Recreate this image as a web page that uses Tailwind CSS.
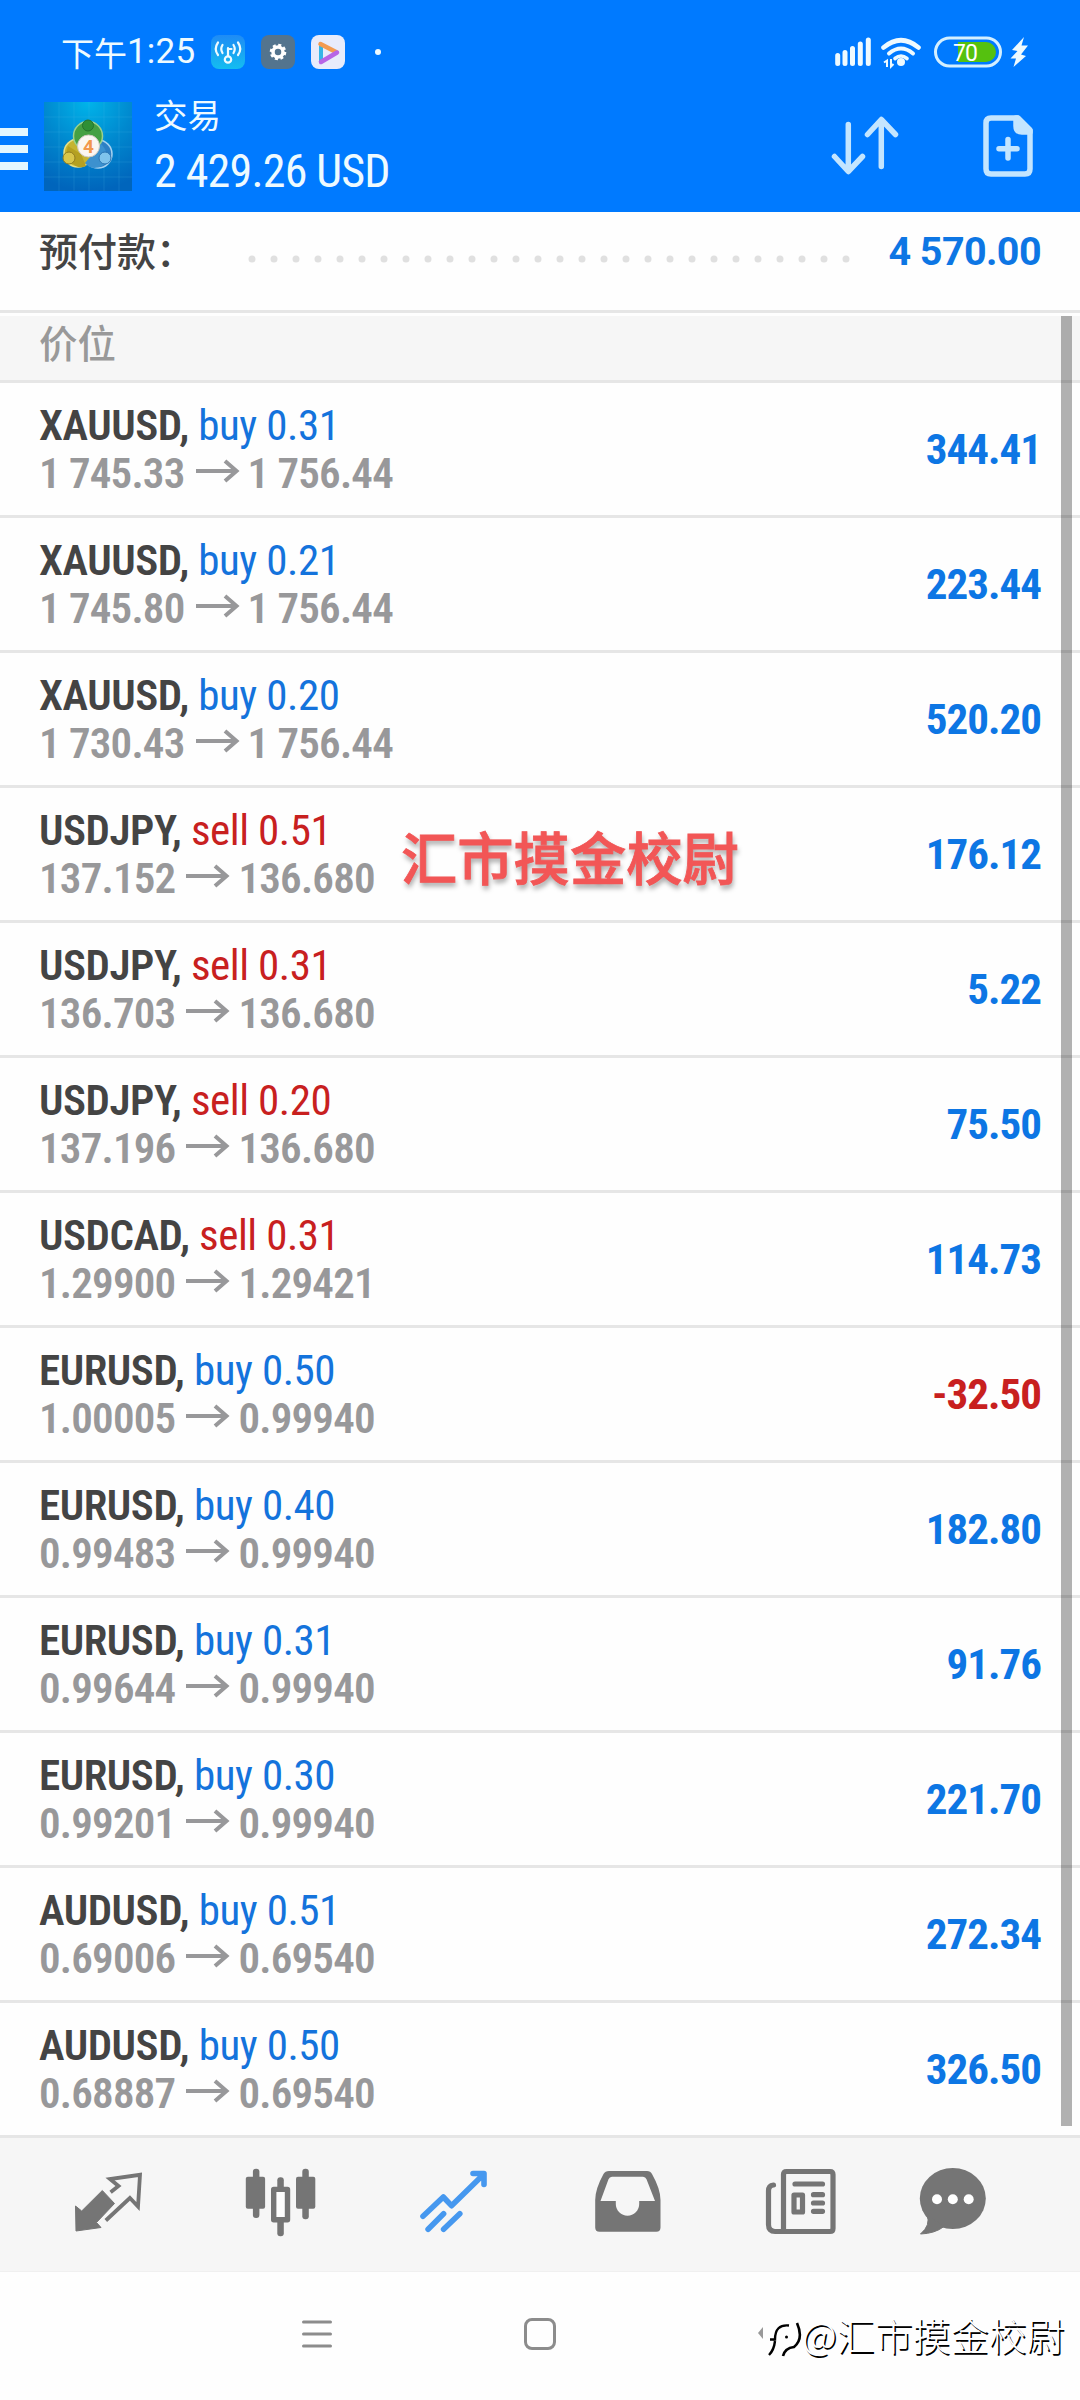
<!DOCTYPE html>
<html lang="zh-Hans">
  <head>
    <meta charset="UTF-8">
    <title>交易</title>
    <script src="https://cdn.jsdelivr.net/npm/@tailwindcss/browser@4"></script>
    <meta name="viewport" content="width=device-width, initial-scale=1.0" />
  </head>
  <body class="bg-white">
    <div class="relative w-[1080px] h-[2400px] overflow-hidden flex flex-col bg-[#fefefe] font-['Roboto_Condensed','Noto_Sans_CJK_SC',sans-serif]">

      <header class="h-[212px] bg-[#007aff] text-[#eefaff] shrink-0">
        <!-- status bar -->
        <div class="h-[86px] pt-[18px] pl-[61px] pr-[50px] flex items-center">
          <div class="w-[150px] h-[34px] flex items-center text-[33px] leading-[34px] font-['Noto_Sans_CJK_SC',sans-serif] whitespace-nowrap">下午<span class="font-['Roboto','Noto_Sans_CJK_SC',sans-serif] text-[35px] tracking-[0.2px]">1:25</span></div>
          <div class="flex gap-4 items-center">
            <svg width="34" height="34" viewBox="0 0 34 34">
              <defs><linearGradient id="hot" x1="0" y1="0" x2="0" y2="1"><stop offset="0" stop-color="#1f8bf5" /><stop offset="1" stop-color="#14bdf0" /></linearGradient></defs>
              <rect width="34" height="34" rx="8" fill="url(#hot)" />
              <g fill="none" stroke="#eefaff" stroke-width="2.2" stroke-linecap="round">
                <circle cx="17" cy="24.500" r="3.200" /><path d="M17 21V13M17 14h3.500" />
                <path d="M11.500 10q-2.500 4 0 8M22.500 10q2.500 4 0 8M7 7.500q-4.500 6.500 0 12.500M27 7.500q4.500 6.500 0 12.500" />
              </g>
            </svg>
            <svg width="34" height="34" viewBox="0 0 34 34">
              <rect width="34" height="34" rx="8" fill="#53748e" />
              <circle cx="17" cy="17" r="5" fill="none" stroke="#fff" stroke-width="3.500" />
              <circle cx="17" cy="17" r="7" fill="none" stroke="#fff" stroke-width="2.600" stroke-dasharray="3 2.500" />
            </svg>
            <svg width="34" height="34" viewBox="0 0 34 34">
              <rect width="34" height="34" rx="8" fill="#e8ecfb" />
              <path d="M10 10V26" stroke="#35b5e6" stroke-width="4" />
              <path d="M9.500 9L25 17" stroke="#f49b50" stroke-width="4.500" stroke-linecap="round" />
              <path d="M26 17.500L10 27" stroke="#b765e6" stroke-width="4.500" stroke-linecap="round" />
            </svg>
          </div>
          <div class="w-1.5 h-1.5 rounded-full bg-[#eefaff] ml-[30px]"></div>
          <svg class="ml-auto" width="200" height="34" viewBox="830 35 200 34">
            <path d="M837.700 55.500V63.500M845 52.500V63.500M852.500 48.500V63.500M860.300 44V63.500M868.300 40V63.500" stroke="#eefaff" stroke-width="5" stroke-linecap="round" />
            <g fill="none" stroke="#eefaff" stroke-width="4.600" stroke-linecap="round">
              <path d="M883.500 47.500Q901 33 918.500 47.500" /><path d="M889 53.500Q901 43.500 913 53.500" stroke-width="4" /><path d="M895 58.500Q901 53.500 907 58.500" stroke-width="3.600" />
            </g>
            <circle cx="901" cy="62" r="4" fill="#eefaff" />
            <path d="M884 62.500L887 60.500V67M891 59V66.500L893.500 64" fill="none" stroke="#eefaff" stroke-width="2" />
            <rect x="935.500" y="38" width="65" height="28" rx="14" fill="none" stroke="#d3efff" stroke-width="3" />
            <path d="M958 42H986a10 10 0 0 1 0 20H958z" fill="#55c10f" />
            <text x="953" y="60.500" font-size="23" class="font-['Roboto',sans-serif]" textLength="25" fill="#fff">70</text>
            <path d="M1024 37L1012 50L1017.500 51L1010.500 58.500L1016 58.500L1013.500 67L1026 56L1021 54.500L1028 45.500L1021.500 45.500Z" fill="#eefaff" />
          </svg>
        </div>
        <!-- account -->
        <div class="flex items-start">
          <div class="mt-[42px] w-[28px] flex flex-col gap-[9px]">
            <div class="h-2 bg-[#e4f7ff]"></div>
            <div class="h-2 bg-[#e4f7ff]"></div>
            <div class="h-2 bg-[#e4f7ff]"></div>
          </div>
          <svg class="mt-4 ml-4" width="88" height="89" viewBox="0 0 88 89">
            <defs>
              <radialGradient id="bg" cx=".5" cy="0" r="1"><stop offset="0" stop-color="#00b4ea" /><stop offset=".5" stop-color="#0089cf" /><stop offset="1" stop-color="#0065bc" /></radialGradient>
            </defs>
            <rect width="88" height="89" fill="url(#bg)" />
            <path d="M15 0V89M30 0V89M45 0V89M60 0V89M75 0V89M0 15H88M0 30H88M0 45H88M0 60H88M0 75H88" stroke="#4bc4ef" stroke-opacity=".18" />
            <circle cx="54" cy="52" r="14" fill="#2d7fc4" stroke="#a6d2f0" stroke-width="1.500" />
            <circle cx="34" cy="51" r="14" fill="#c5b431" stroke="#e7df86" stroke-width="1.500" />
            <circle cx="44" cy="34" r="14.500" fill="#45a043" stroke="#9bd18e" stroke-width="1.500" />
            <path d="M57 42Q66 50 60 63Q48 70 41 61Z" fill="#3c91cf" />
            <path d="M24 44Q20 54 27 60Q34 68 42 64L37 52Z" fill="#b5a021" />
            <circle cx="44" cy="23.500" r="5.500" fill="#2f8f35" stroke="#25722d" />
            <circle cx="25" cy="56" r="6" fill="#d9c64a" stroke="#917c1f" />
            <circle cx="61" cy="56" r="6" fill="#7fc3ec" stroke="#2a74b3" />
            <circle cx="44.500" cy="44" r="11" fill="#fbf6f1" stroke="#cfc9bf" />
            <text x="44.500" y="50.500" text-anchor="middle" font-size="19" class="font-['Roboto',sans-serif] font-bold" fill="#f2974d">4</text>
          </svg>
          <div class="ml-[22px] leading-[57px]">
            <div class="text-[33.500px] h-[57px] font-['Noto_Sans_CJK_SC',sans-serif]"><span class="relative -top-px">交易</span></div>
            <div class="text-[46px] tracking-[-0.800px]">2 429.26 USD</div>
          </div>
          <svg class="mt-[26px] ml-auto mr-[42px]" width="212" height="68" viewBox="826 112 212 68" fill="none" stroke="#c3e5ff" stroke-width="5.500" stroke-linecap="round" stroke-linejoin="round">
            <path d="M848.300 124.500V171M834.500 156.500L848.300 171.500L862.500 156.500" />
            <path d="M881.300 166.500V120M867.500 134.500L881.300 119.500L895.500 134.500" />
            <path d="M991 118H1017.500L1030 130.500V169q0 5-5 5H991q-5 0-5-5V123q0-5 5-5z" />
            <path d="M1016 118V126q0 6 6 6H1030V130L1018 118z" fill="#c3e5ff" />
            <path d="M999 148.800H1017M1008 139.500V158" />
          </svg>
        </div>
      </header>

      <!-- margin summary -->
      <div class="h-[101px] shrink-0 border-b-3 border-[#e6e6e6] px-[39px] pt-[15px] flex items-start leading-[50px]">
        <div class="w-[209px] text-[39px] font-medium text-[#444] font-['Noto_Sans_CJK_SC',sans-serif] whitespace-nowrap"><span class="relative -top-[3px]">预付款：</span></div>
        <svg class="mt-[28px]" width="602" height="8" viewBox="0 0 602 8">
          <path d="M4 4H600" stroke="#e0e0e0" stroke-width="7" stroke-linecap="round" stroke-dasharray="0 22" />
        </svg>
        <div class="ml-auto text-[39.500px] font-bold text-[#0d76e4] font-['Roboto',sans-serif] tracking-[-0.600px]">4 570.00</div>
      </div>

      <div class="mt-[3px] h-[67px] shrink-0 bg-[#f6f6f6] border-b-3 border-[#e6e6e6] px-[39px] text-[38.500px] leading-[50px] font-medium text-[#999] font-['Noto_Sans_CJK_SC',sans-serif]">价位</div>

      <div id="positions"></div>

      <!-- bottom tabs -->
      <nav class="h-[133px] shrink-0 bg-[#f6f6f6] pl-[21px] grid grid-cols-[repeat(5,173.300px)_131px] items-center justify-items-center">
        <svg width="80" height="80" viewBox="0 0 80 80">
          <path d="M7.500 41L13.700 46L34.300 25.500L46.500 38.500L28.500 57.500L33 62.500L8 66z" fill="#757575" stroke="#757575" stroke-linejoin="round" />
          <path d="M42.600 27.300L50.500 21L42 14L72 9.800L70 41.500L61.900 33L37.800 55.500" fill="none" stroke="#757575" stroke-width="3.800" />
        </svg>
        <svg width="80" height="80" viewBox="0 0 80 80" fill="#757575">
          <rect x="4.800" y="11.700" width="19.300" height="32" rx="2" /><rect x="11.900" y="3.700" width="6.500" height="49.300" rx="3" />
          <rect x="55" y="11.700" width="19.300" height="32" rx="2" /><rect x="61.300" y="3.700" width="6.500" height="50.500" rx="3" />
          <rect x="36.300" y="12.300" width="6.500" height="12" rx="3" /><rect x="36.300" y="54" width="6.500" height="17.300" rx="3" />
          <rect x="32.700" y="24.400" width="13.800" height="30.300" fill="#fdfdfd" stroke="#757575" stroke-width="5.400" stroke-linejoin="round" />
        </svg>
        <svg width="80" height="80" viewBox="0 0 80 80" fill="none" stroke="#4698ef" stroke-width="5.600" stroke-linecap="round" stroke-linejoin="round">
          <path d="M9 51.300L29.300 32L37.500 40.700L69.200 9.800M59 8.500H70V19.500M14.100 64.300L29.600 48.700M29.600 64.300L45.800 48.700" />
        </svg>
        <svg width="80" height="80" viewBox="0 0 80 80">
          <path fill="#757575" fill-rule="evenodd" d="M21 6H59q3.500 0 5 3Q72.500 24 72.500 35V62.500q0 4.200-4.200 4.200H11.500q-4.300 0-4.300-4.200V35Q7.200 24 15.500 9q1.700-3 5.500-3zM24 11.700q-2.500 0-3.500 2.500L12.500 36H27.800V39a11.700 11.700 0 0 0 23.400 0V36H67L58.500 14.200q-1-2.500-3.500-2.500z" />
        </svg>
        <svg width="80" height="80" viewBox="0 0 80 80" fill="none" stroke="#757575" stroke-width="5.200" stroke-linecap="round" stroke-linejoin="round">
          <path d="M22.500 66.500V9.500q0-3 3-3H69q3 0 3 3V63.500q0 3-3 3H14q-6.500 0-6.500-7V26q0-5.500 5-6" />
          <path d="M34 19H61.500M52.500 29.700H61.500M52.500 38H61.500M52.500 46.300H61.500" />
          <rect x="33" y="30" width="8.500" height="17" />
        </svg>
        <svg width="80" height="80" viewBox="0 0 80 80">
          <ellipse cx="39.800" cy="33.500" rx="33" ry="30.500" fill="#757575" />
          <path d="M14 50Q18 60 7.500 69Q22 68.500 31 61.500z" fill="#757575" stroke="#757575" />
          <circle cx="24" cy="34.300" r="5" fill="#fff" /><circle cx="39.800" cy="34.300" r="5" fill="#fff" /><circle cx="55.700" cy="34.300" r="5" fill="#fff" />
        </svg>
      </nav>

      <!-- system navigation -->
      <div class="h-[129px] shrink-0 border-t border-[#f0f0f0] pl-[302px] pb-1 flex items-center">
        <svg width="30" height="28" viewBox="0 0 30 28" stroke="#8c8c8c" stroke-width="3" stroke-linecap="round"><path d="M1.500 2H28.500M1.500 14H28.500M1.500 26H28.500" /></svg>
        <div class="ml-[192px] w-8 h-8 rounded-[8px] border-3 border-[#8c8c8c]"></div>
        <svg class="ml-[202px]" width="46" height="48" viewBox="0 0 46 48">
          <path d="M0 23L5 17V29z" fill="#999" />
          <path d="M12 29.500H17Q17 14 31 15.500M17 31Q16 40 11 45" fill="none" stroke="#000" stroke-width="2.400" />
          <path d="M39 13Q46 29 36 37Q27 38 25 46" fill="none" stroke="#000" stroke-width="2.600" />
          <circle cx="28.500" cy="27" r="1.500" />
        </svg>
        <div class="-ml-0.5 flex items-center text-[38px] text-white whitespace-nowrap font-light font-['Noto_Sans_CJK_SC',sans-serif] [text-shadow:1.500px_1.500px_0.500px_#000] leading-[56px]">@汇市摸金校尉</div>
      </div>

      <!-- scrollbar and overlay mark -->
      <div class="absolute left-[1061px] top-[316px] w-[11px] h-[1810px] bg-black/30"></div>
      <div class="absolute left-[401px] top-[818px] text-[56.300px] leading-[76px] font-medium text-[#f25656] font-['Noto_Sans_CJK_SC',sans-serif] whitespace-nowrap [-webkit-text-stroke:0.800px_#f25656] [text-shadow:1px_4px_5px_rgba(0,0,0,0.35)]">汇市摸金校尉</div>
    </div>

    <script>
    const positions = [
      ['XAUUSD', 'buy', '0.31', '1 745.33', '1 756.44', '344.41'],
      ['XAUUSD', 'buy', '0.21', '1 745.80', '1 756.44', '223.44'],
      ['XAUUSD', 'buy', '0.20', '1 730.43', '1 756.44', '520.20'],
      ['USDJPY', 'sell', '0.51', '137.152', '136.680', '176.12'],
      ['USDJPY', 'sell', '0.31', '136.703', '136.680', '5.22'],
      ['USDJPY', 'sell', '0.20', '137.196', '136.680', '75.50'],
      ['USDCAD', 'sell', '0.31', '1.29900', '1.29421', '114.73'],
      ['EURUSD', 'buy', '0.50', '1.00005', '0.99940', '-32.50'],
      ['EURUSD', 'buy', '0.40', '0.99483', '0.99940', '182.80'],
      ['EURUSD', 'buy', '0.31', '0.99644', '0.99940', '91.76'],
      ['EURUSD', 'buy', '0.30', '0.99201', '0.99940', '221.70'],
      ['AUDUSD', 'buy', '0.51', '0.69006', '0.69540', '272.34'],
      ['AUDUSD', 'buy', '0.50', '0.68887', '0.69540', '326.50'],
    ];

    document.getElementById('positions').innerHTML = positions.map(([symbol, side, lots, open, now, profit]) => `
      <div class="h-[135px] border-b-3 border-[#e6e6e6] px-[39px] flex items-center justify-between text-[43px] leading-[48px] tracking-[-0.800px]">
        <div>
          <div class="font-semibold tracking-[-0.450px] text-[#444]">${symbol}, <span class="font-normal ${side === 'buy' ? 'text-[#1473dc]' : 'text-[#c8201f]'}">${side} ${lots}</span></div>
          <div class="flex items-center font-semibold text-[#98989a]">${open}
            <svg class="ml-[11px] mr-2 mb-1" width="44" height="24" viewBox="0 0 44 24" fill="none" stroke="#98989a" stroke-width="4"><path d="M0 12H41M29 2L40.500 12L29 22" /></svg>
            ${now}</div>
        </div>
        <div class="font-bold tracking-[-1px] ${profit[0] === '-' ? 'text-[#c8201f]' : 'text-[#0d76e4]'}">${profit}</div>
      </div>`).join('');
    </script>
  </body>
</html>
